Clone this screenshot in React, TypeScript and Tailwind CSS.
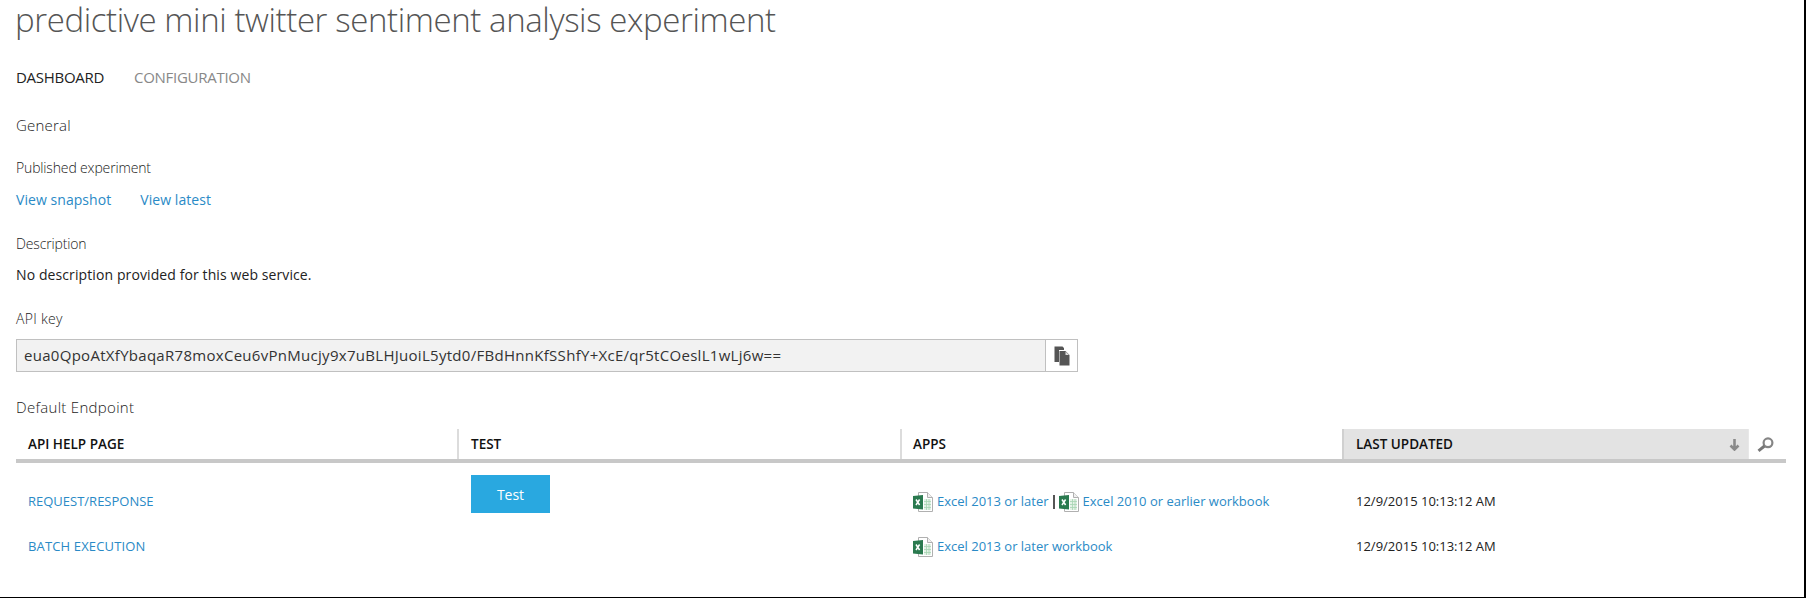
const font = { fontFamily: '"Open Sans", sans-serif' };

function ExcelIcon() {
  return (
    <svg width="20" height="20" viewBox="0 0 20 20" className="shrink-0">
      <path d="M5.5 0.5H14.5L19.5 5.5V19.5H5.5Z" fill="#fff" stroke="#b0b0b0" />
      <path d="M14.5 0.5V5.5H19.5" fill="#f0f0f0" stroke="#b0b0b0" />
      <path d="M11 7H18V18H11Z" fill="#e4f2e7" />
      <path d="M11 9.5H18M11 12.5H18M11 15.5H18M13.5 7V18M16 7V18" stroke="#a6d4b2" strokeWidth="0.8" />
      <path d="M0 4L10 3V17.5L0 16.5Z" fill="#2a7a4f" />
      <path d="M3 7.5L6.6 13M6.6 7.5L3 13" stroke="#fff" strokeWidth="1.5" />
    </svg>
  );
}

function CopyIcon() {
  return (
    <svg width="16" height="20" viewBox="0 0 16 20">
      <path d="M0.5 0.5H8.5L10 2V4H5V16H0.5Z" fill="#555" />
      <path d="M5.5 5H11.5L15.5 9V19.5H5.5Z" fill="#555" />
      <path d="M11.5 5.5V9H15Z" fill="#ddd" />
    </svg>
  );
}

function SortArrow() {
  return (
    <svg width="11" height="13" viewBox="0 0 11 13">
      <path d="M5.5 1V11M1.5 7.5L5.5 11.5L9.5 7.5" fill="none" stroke="#8a8a8a" strokeWidth="2.6" />
    </svg>
  );
}

function SearchIcon() {
  return (
    <svg width="17" height="15" viewBox="0 0 17 15">
      <circle cx="11" cy="5.8" r="4.4" fill="none" stroke="#858585" strokeWidth="2.2" />
      <path d="M7.5 9L1.5 13.8" stroke="#777" strokeWidth="3" />
    </svg>
  );
}

const linkClass = 'text-[#2a8ac6] text-[13px]';

export default function App() {
  return (
    <div className="w-[1806px] h-[598px] bg-white border-r-2 border-b border-black overflow-hidden pl-[16px] text-[#333]" style={font}>
      <h1 className="h-[46px] -mt-[3px] -ml-[1px] font-light text-[33px] leading-[46px] text-[#555] tracking-[-0.4px] whitespace-nowrap">
        predictive mini twitter sentiment analysis experiment
      </h1>

      <div className="mt-[22px] h-6 flex items-center text-[15px] tracking-[-0.28px]">
        <span className="text-[#222] w-[118px]">DASHBOARD</span>
        <span className="text-[#888]">CONFIGURATION</span>
      </div>

      <h2 className="mt-[25px] h-[22px] flex items-center text-[15px] font-light text-[#222] tracking-[0.2px]">General</h2>

      <div className="mt-[21px] h-5 flex items-center text-[14px] font-light text-[#222] tracking-[-0.15px]">Published experiment</div>
      <div className="mt-[12px] h-5 flex items-center gap-[29px] text-[14px] text-[#2a8ac6] tracking-[0.06px]">
        <a>View snapshot</a>
        <a>View latest</a>
      </div>

      <div className="mt-[24px] h-5 flex items-center text-[14px] font-light text-[#222] tracking-[-0.15px]">Description</div>
      <div className="mt-[11px] h-5 flex items-center text-[14px] text-[#222] tracking-[0.1px]">No description provided for this web service.</div>

      <div className="mt-[24px] h-5 flex items-center text-[14px] font-light text-[#222] tracking-[0.3px]">API key</div>
      <div className="mt-[11px] w-[1062px] h-[33px] flex border border-[#c0c0c0]">
        <div className="flex-1 bg-[#f2f2f2] flex items-center pl-[7px] text-[15px] text-[#333] tracking-[0.29px]">
          eua0QpoAtXfYbaqaR78moxCeu6vPnMucjy9x7uBLHJuoiL5ytd0/FBdHnnKfSShfY+XcE/qr5tCOeslL1wLj6w==
        </div>
        <button className="w-[32px] border-l border-[#c0c0c0] flex items-center justify-center">
          <CopyIcon />
        </button>
      </div>

      <h2 className="mt-[24px] h-[22px] flex items-center text-[15px] font-light text-[#222] tracking-[0.3px]">Default Endpoint</h2>

      <div className="mt-[11px] w-[1770px]">
        <div className="grid grid-cols-[441px_443px_442px_406px_38px] h-[34px] border-b-4 border-[#c8c8c8] text-[13.5px] font-semibold text-[#111]">
          <div className="pl-3 flex items-center">API HELP PAGE</div>
          <div className="pl-[12px] border-l-2 border-[#dcdcdc] flex items-center">TEST</div>
          <div className="pl-[11px] border-l-2 border-[#dcdcdc] flex items-center">APPS</div>
          <div className="pl-[12px] border-l-2 border-[#d0d0d0] bg-[#e3e3e3] flex items-center justify-between pr-[8px]">
            LAST UPDATED
            <SortArrow />
          </div>
          <div className="flex items-center pl-[8px] border-l border-[#e8e8e8]">
            <SearchIcon />
          </div>
        </div>

        <div className="mt-[12px] grid grid-cols-[441px_443px_442px_444px] grid-rows-[54px_36px]">
          <div className="pl-3 flex items-center">
            <a className={linkClass}>REQUEST/RESPONSE</a>
          </div>
          <div className="pl-[14px]">
            <button className="w-[79px] h-[38px] bg-[#29a8e0] text-white text-[14px] pt-[1px]">Test</button>
          </div>
          <div className="pl-[13px] flex items-center">
            <ExcelIcon />
            <a className={`${linkClass} ml-[4px]`}>Excel 2013 or later</a>
            <span className="mx-[4px] w-[2px] h-[14px] bg-[#555]" />
            <ExcelIcon />
            <a className={`${linkClass} ml-[4px]`}>Excel 2010 or earlier workbook</a>
          </div>
          <div className="pl-[14px] flex items-center text-[13px] text-[#222]">12/9/2015 10:13:12 AM</div>

          <div className="pl-3 flex items-center">
            <a className={`${linkClass} tracking-[0.15px]`}>BATCH EXECUTION</a>
          </div>
          <div />
          <div className="pl-[13px] flex items-center">
            <ExcelIcon />
            <a className={`${linkClass} ml-[4px]`}>Excel 2013 or later workbook</a>
          </div>
          <div className="pl-[14px] flex items-center text-[13px] text-[#222]">12/9/2015 10:13:12 AM</div>
        </div>
      </div>
    </div>
  );
}
